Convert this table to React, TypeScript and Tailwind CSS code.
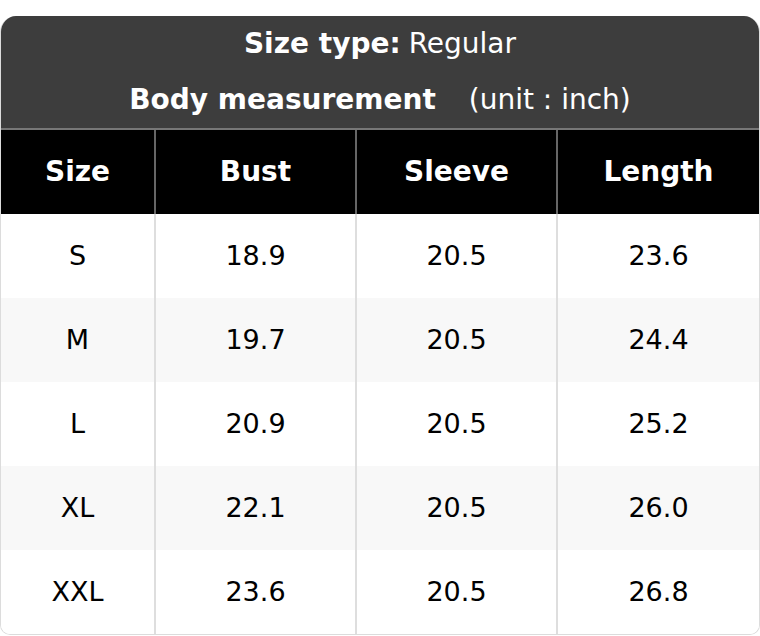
const columns = ["Size", "Bust", "Sleeve", "Length"];

const rows = [
  ["S", "18.9", "20.5", "23.6"],
  ["M", "19.7", "20.5", "24.4"],
  ["L", "20.9", "20.5", "25.2"],
  ["XL", "22.1", "20.5", "26.0"],
  ["XXL", "23.6", "20.5", "26.8"],
];

const widths = ["w-[155px]", "w-[201px]", "w-[201px]", "flex-1"];

export default function App() {
  return (
    <div
      className="bg-white pt-4 pb-[2px]"
      style={{ fontFamily: '"DejaVu Sans", sans-serif' }}
    >
      <div className="overflow-hidden rounded-t-[16px] rounded-b-[10px] border border-[#dcdcdc] border-t-0">
        <div className="bg-[#3d3d3d] text-white text-[28px] text-center border-b-2 border-[#777]">
          <div className="h-[56px] flex items-center justify-center">
            <span className="font-bold">Size type:</span>
            <span className="ml-[8px]">Regular</span>
          </div>
          <div className="h-[56px] flex items-center justify-center">
            <span className="font-bold">Body measurement</span>
            <span className="ml-[33px]">(unit : inch)</span>
          </div>
        </div>
        <div className="flex bg-black text-white text-[28px] font-bold h-[84px]">
          {columns.map((c, i) => (
            <div
              key={c}
              className={`${widths[i]} flex items-center justify-center ${
                i < 3 ? "border-r-2 border-[#666]" : ""
              }`}
            >
              {c}
            </div>
          ))}
        </div>
        {rows.map((r, ri) => (
          <div
            key={r[0]}
            className={`flex h-[84px] text-[27px] text-black ${
              ri % 2 === 1 ? "bg-[#f8f8f8]" : "bg-white"
            }`}
          >
            {r.map((v, i) => (
              <div
                key={i}
                className={`${widths[i]} flex items-center justify-center pt-[1px] ${
                  i < 3 ? "border-r-2 border-[#dedede]" : ""
                }`}
              >
                {v}
              </div>
            ))}
          </div>
        ))}
      </div>
    </div>
  );
}
